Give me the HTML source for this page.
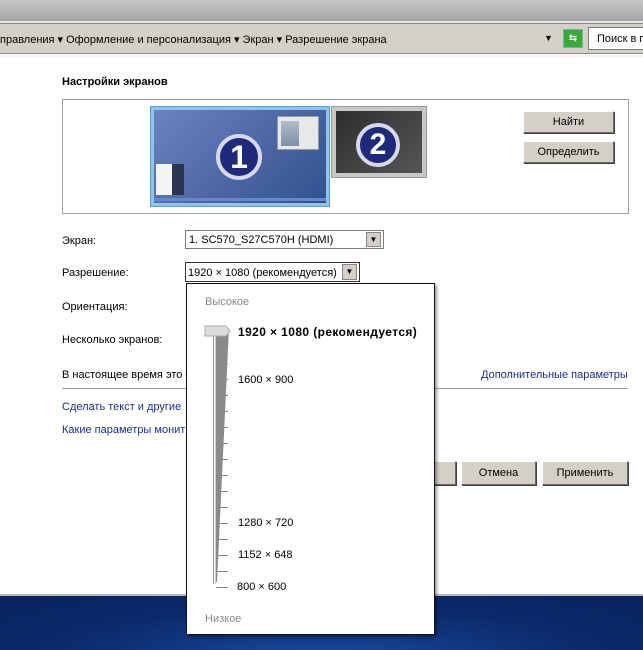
<!DOCTYPE html>
<html><head><meta charset="utf-8"><style>
*{margin:0;padding:0;box-sizing:border-box}
body{width:643px;height:650px;overflow:hidden;position:relative;background:#fff;font-family:Tahoma,"Liberation Sans","DejaVu Sans",sans-serif;font-size:11px;color:#000}
.a{position:absolute;white-space:nowrap}
.btn{position:absolute;background:#d4d0c8;border:1px solid;border-color:#fff #6b6b6b #6b6b6b #fff;box-shadow:1px 1px 0 #404040;text-align:center;font-size:11px}
.link{color:#1a2f8a}
.lbl{position:absolute;font-size:11px;white-space:nowrap}
.tick{position:absolute;left:216px;width:12px;height:1px;background:#888}
</style></head><body>
<div class="a" style="left:0;top:0;width:643px;height:21px;background:linear-gradient(#c8c8c8,#a4a4a4)"></div>
<div class="a" style="left:0;top:21px;width:643px;height:2px;background:#e8e8e8"></div>
<div class="a" style="left:0;top:23px;width:643px;height:31px;background:#d4d0c8;border-top:1px solid #888;border-bottom:1px solid #888"></div>
<div class="a" style="left:0;top:33px;font-size:11px">правления ▾ Оформление и персонализация ▾ Экран ▾ Разрешение экрана</div>
<div class="a" style="left:544px;top:33px;font-size:9px">▼</div>
<div class="a" style="left:563px;top:29px;width:20px;height:19px;background:#3aa83a;border:1px solid #6b9;color:#fff;font-size:10px;text-align:center;line-height:17px;font-weight:bold">⇆</div>
<div class="a" style="left:588px;top:27px;width:60px;height:23px;background:#fff;border:1px solid #7a7a7a;padding:5px 0 0 8px">Поиск в п</div>
<div class="a" style="left:0;top:55px;width:643px;height:2px;background:#f0f0f0"></div>

<div class="a" style="left:62px;top:76px;font-weight:bold;font-size:11px">Настройки экранов</div>
<div class="a" style="left:62px;top:99px;width:567px;height:115px;border:1px solid #a0a0a0"></div>
<div class="a" style="left:150px;top:106px;width:180px;height:101px;background:#8fc4ec;border:1px solid #5aa0d8;padding:3px">
 <div style="width:100%;height:100%;background:linear-gradient(135deg,#6a82c0,#34508f)"></div></div>
<div class="a" style="left:154px;top:198px;width:172px;height:3px;background:#6a86c4"></div>
<div class="a" style="left:156px;top:164px;width:16px;height:31px;background:#f4f4f4"></div>
<div class="a" style="left:172px;top:164px;width:12px;height:31px;background:#2a3550"></div>
<div class="a" style="left:277px;top:116px;width:42px;height:34px;background:#e8e8e8;border:1px solid #999"></div>
<div class="a" style="left:281px;top:121px;width:18px;height:25px;background:linear-gradient(#b0bccc,#7f8fa3)"></div>
<div class="a" style="left:216px;top:134px;width:46px;height:46px;border-radius:50%;background:#1f2a7a;border:4px solid #d8d8ee;color:#fff;font:bold 32px 'Liberation Sans',sans-serif;text-align:center;line-height:38px">1</div>
<div class="a" style="left:331px;top:106px;width:96px;height:72px;background:#c8c8c8;border:1px solid #999;padding:4px">
 <div style="width:100%;height:100%;background:linear-gradient(135deg,#2e2e2e,#555)"></div></div>
<div class="a" style="left:356px;top:123px;width:44px;height:44px;border-radius:50%;background:#1f2a7a;border:4px solid #d8d8ee;color:#fff;font:bold 30px 'Liberation Sans',sans-serif;text-align:center;line-height:36px">2</div>
<div class="btn" style="left:523px;top:111px;width:91px;height:22px;line-height:20px">Найти</div>
<div class="btn" style="left:523px;top:141px;width:91px;height:22px;line-height:20px">Определить</div>

<div class="lbl" style="left:62px;top:235px">Экран:</div>
<div class="a" style="left:185px;top:230px;width:199px;height:19px;border:1px solid #7a7a7a;padding:3px 0 0 3px">1. SC570_S27C570H (HDMI)</div>
<div class="a" style="left:366px;top:232px;width:15px;height:15px;background:#d4d0c8;border:1px solid #888;font-size:8px;text-align:center;line-height:13px">▼</div>
<div class="lbl" style="left:62px;top:267px">Разрешение:</div>
<div class="a" style="left:185px;top:262px;width:175px;height:20px;border:1px solid #333;padding:4px 0 0 2px">1920 × 1080 (рекомендуется)</div>
<div class="a" style="left:342px;top:264px;width:15px;height:16px;background:#d4d0c8;border:1px solid #888;font-size:8px;text-align:center;line-height:14px">▼</div>
<div class="lbl" style="left:62px;top:301px">Ориентация:</div>
<div class="lbl" style="left:62px;top:334px">Несколько экранов:</div>
<div class="lbl" style="left:62px;top:369px">В настоящее время это о</div>
<div class="lbl link" style="left:481px;top:369px">Дополнительные параметры</div>
<div class="a" style="left:62px;top:388px;width:566px;height:1px;background:#a0a0a0"></div>
<div class="lbl link" style="left:62px;top:401px">Сделать текст и другие</div>
<div class="lbl link" style="left:62px;top:424px">Какие параметры монит</div>
<div class="btn" style="left:420px;top:461px;width:36px;height:24px"></div>
<div class="btn" style="left:461px;top:461px;width:75px;height:24px;line-height:23px">Отмена</div>
<div class="btn" style="left:542px;top:461px;width:86px;height:24px;line-height:23px">Применить</div>

<div class="a" style="left:0;top:594px;width:643px;height:2px;background:#bbb"></div>
<div class="a" style="left:0;top:596px;width:643px;height:54px;background:radial-gradient(ellipse at 50% 120%,#1a4aa0,#0b2a6a 60%,#0a2260)"></div>

<div class="a" style="left:186px;top:283px;width:249px;height:352px;background:#fff;border:1px solid #111;box-shadow:2px 2px 3px rgba(0,0,0,.4)"></div>
<div class="lbl" style="left:205px;top:296px;color:#888">Высокое</div>
<div class="lbl" style="left:205px;top:613px;color:#888">Низкое</div>
<svg class="a" style="left:200px;top:320px" width="40" height="272">
 <line x1="13.5" y1="10" x2="13.5" y2="264" stroke="#999" stroke-width="1"/>
 <line x1="15.5" y1="10" x2="15.5" y2="264" stroke="#ccc" stroke-width="1"/>
 <polygon points="16,12 29,8 17,262 16,262" fill="#8a8a8a"/>
 <polygon points="5,6 26,6 30,11 26,16 5,16" fill="#dcdcdc" stroke="#aaa"/>
</svg>
<div class="tick" style="top:347px"></div><div class="tick" style="top:363px"></div>
<div class="tick" style="top:379px"></div><div class="tick" style="top:395px"></div>
<div class="tick" style="top:411px"></div><div class="tick" style="top:427px"></div>
<div class="tick" style="top:443px"></div><div class="tick" style="top:459px"></div>
<div class="tick" style="top:475px"></div><div class="tick" style="top:491px"></div>
<div class="tick" style="top:507px"></div><div class="tick" style="top:523px"></div>
<div class="tick" style="top:539px"></div><div class="tick" style="top:555px"></div>
<div class="tick" style="top:571px"></div><div class="tick" style="top:587px"></div>
<div class="lbl" style="left:238px;top:325px;font-weight:bold;font-size:12px;letter-spacing:0.4px">1920 × 1080 (рекомендуется)</div>
<div class="lbl" style="left:238px;top:374px">1600 × 900</div>
<div class="lbl" style="left:238px;top:517px">1280 × 720</div>
<div class="lbl" style="left:238px;top:549px">1152 × 648</div>
<div class="lbl" style="left:237px;top:581px">800 × 600</div>
</body></html>
